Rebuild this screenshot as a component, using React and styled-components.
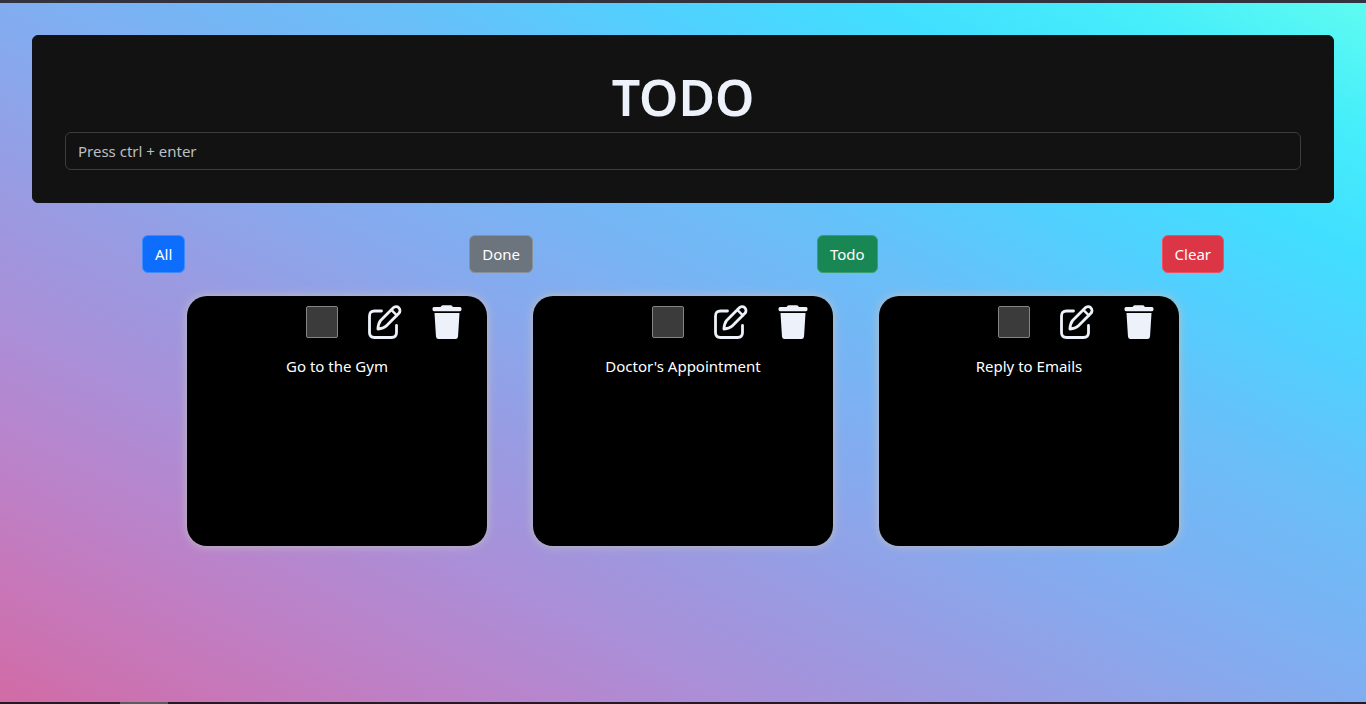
import React, { useState } from "react";
import styled, { createGlobalStyle } from "styled-components";

const GlobalStyle = createGlobalStyle`
  *, *::before, *::after { box-sizing: border-box; }
  body {
    margin: 0;
    font-family: "Segoe UI", "Noto Sans", "Liberation Sans", sans-serif;
    font-size: 15px;
    line-height: 24px;
    color: #fff;
  }
`;

const Page = styled.div`
  min-height: 100vh;
  display: flex;
  flex-direction: column;
`;

const TopEdge = styled.div`
  height: 3px;
  background: #32333f;
`;

const BottomEdge = styled.div`
  height: 2px;
  padding-left: 120px;
  background: #231a26;
`;

const EdgeThumb = styled.div`
  width: 48px;
  height: 100%;
  background: #5c5c5e;
`;

const Main = styled.main`
  flex: 1;
  display: flex;
  flex-direction: column;
  background: linear-gradient(
    to right top,
    #d16ba5, #c777b9, #ba83ca, #aa8fd8, #9a9ae1, #8aa7ec,
    #79b3f4, #69bff8, #52cffe, #41dfff, #46eefa, #5ffbf1
  );
`;

const Header = styled.header`
  margin: 32px;
  padding: 32px;
  border: 1px solid #101418;
  border-radius: 6px;
  background: #121212;
`;

const Title = styled.h1`
  margin: 0 0 6px;
  font-size: 50px;
  line-height: 58px;
  font-weight: 600;
  text-align: center;
  color: #edf2fa;
`;

const TaskInput = styled.input`
  display: block;
  width: 100%;
  height: 38px;
  padding: 6px 12px;
  border: 1px solid #3d3d3d;
  border-radius: 6px;
  background: #121212;
  color: #fff;
  font: inherit;
  &::placeholder { color: #bcbfc2; opacity: 1; }
`;

const Filters = styled.nav`
  display: flex;
  justify-content: space-around;
`;

const FilterButton = styled.button`
  height: 38px;
  padding: 6px 12px;
  border: 1px solid ${(p) => p.$edge};
  border-radius: 6px;
  background: ${(p) => p.$fill};
  color: #fff;
  font: inherit;
  cursor: pointer;
`;

const Cards = styled.section`
  display: flex;
  flex-wrap: wrap;
  justify-content: center;
  gap: 46px;
  padding: 23px 32px 32px;
`;

const Card = styled.article`
  width: 300px;
  height: 250px;
  border-radius: 20px;
  background: #000;
  box-shadow: 0 0 10px #c0c0c0;
  text-align: center;
`;

const Tools = styled.div`
  display: flex;
  justify-content: flex-end;
  align-items: center;
  gap: 30px;
  padding: 9px 25px 0 0;
`;

const Check = styled.input`
  appearance: none;
  width: 32px;
  height: 32px;
  margin: 0;
  border: 1px solid #858585;
  border-radius: 2px;
  background: #3b3b3b;
  &:checked { background: #198754; }
`;

const IconButton = styled.button`
  display: flex;
  padding: 0;
  border: 0;
  background: none;
  color: #edf2fa;
  cursor: pointer;
`;

const TaskText = styled.p`
  margin: 15px 12px 0;
`;

const EditIcon = () => (
  <svg width="34" height="34" viewBox="0 0 34 34" fill="none" stroke="currentColor" strokeWidth="2.8" strokeLinecap="round" strokeLinejoin="round" aria-hidden="true">
    <path d="M13.5 6H6.5Q1.500 6 1.500 11V27.500Q1.500 32.500 6.500 32.500H23.500Q28.500 32.500 28.500 27.500V20.500" />
    <path d="M9.900 24Q10.300 18.300 12.600 15.500L25.300 2.800A3.800 3.800 0 0 1 30.900 8.200L18.200 20.900Q15.500 23.500 9.900 24Z" />
    <path d="M23.300 4.900L28.800 10.300" strokeWidth="2.400" />
  </svg>
);

const TrashIcon = () => (
  <svg width="30" height="34" viewBox="2 0 30 34" fill="currentColor" aria-hidden="true">
    <path d="M11 1.500Q11.500 .3 13 .3H20.500Q22 .3 22.500 1.500L23 2H30Q31.500 2 31.500 3.500V4.500Q31.500 6.200 30 6.200H4Q2.500 6.200 2.500 4.500V3.500Q2.500 2 4 2H10.500Z" />
    <path d="M4.500 8H29.500L28 31.500Q27.800 34 25.500 34H8.500Q6.200 34 6 31.500Z" />
  </svg>
);

const filters = [
  { label: "All", fill: "#0d6efd", edge: "#3d8bfd" },
  { label: "Done", fill: "#6c757d", edge: "#899097" },
  { label: "Todo", fill: "#198754", edge: "#3a9e6c" },
  { label: "Clear", fill: "#dc3545", edge: "#f04d60" },
];

const initialTasks = ["Go to the Gym", "Doctor's Appointment", "Reply to Emails"];

export default function App() {
  const [tasks, setTasks] = useState(initialTasks.map((text) => ({ text, done: false })));
  const [filter, setFilter] = useState("All");
  const [draft, setDraft] = useState("");

  const shown = tasks.filter((t) => filter === "All" || (filter === "Done") === t.done);

  const addTask = (e) => {
    if (e.ctrlKey && e.key === "Enter" && draft.trim()) {
      setTasks([...tasks, { text: draft.trim(), done: false }]);
      setDraft("");
    }
  };

  const editTask = (task) => {
    const text = window.prompt("Edit task", task.text);
    if (text) setTasks(tasks.map((t) => (t === task ? { ...t, text } : t)));
  };

  return (
    <Page>
      <GlobalStyle />
      <TopEdge />
      <Main>
        <Header>
          <Title>TODO</Title>
          <TaskInput
            aria-label="New task"
            placeholder="Press ctrl + enter"
            value={draft}
            onChange={(e) => setDraft(e.target.value)}
            onKeyDown={addTask}
          />
        </Header>
        <Filters aria-label="Filter tasks">
          {filters.map(({ label, fill, edge }) => (
            <FilterButton
              key={label}
              type="button"
              $fill={fill}
              $edge={edge}
              onClick={() => (label === "Clear" ? setTasks([]) : setFilter(label))}
            >
              {label}
            </FilterButton>
          ))}
        </Filters>
        <Cards>
          {shown.map((task) => (
            <Card key={task.text}>
              <Tools>
                <Check
                  type="checkbox"
                  aria-label={`Mark ${task.text} as done`}
                  checked={task.done}
                  onChange={() => setTasks(tasks.map((t) => (t === task ? { ...t, done: !t.done } : t)))}
                />
                <IconButton type="button" aria-label="Edit" onClick={() => editTask(task)}>
                  <EditIcon />
                </IconButton>
                <IconButton type="button" aria-label="Delete" onClick={() => setTasks(tasks.filter((t) => t !== task))}>
                  <TrashIcon />
                </IconButton>
              </Tools>
              <TaskText>{task.text}</TaskText>
            </Card>
          ))}
        </Cards>
      </Main>
      <BottomEdge>
        <EdgeThumb />
      </BottomEdge>
    </Page>
  );
}
